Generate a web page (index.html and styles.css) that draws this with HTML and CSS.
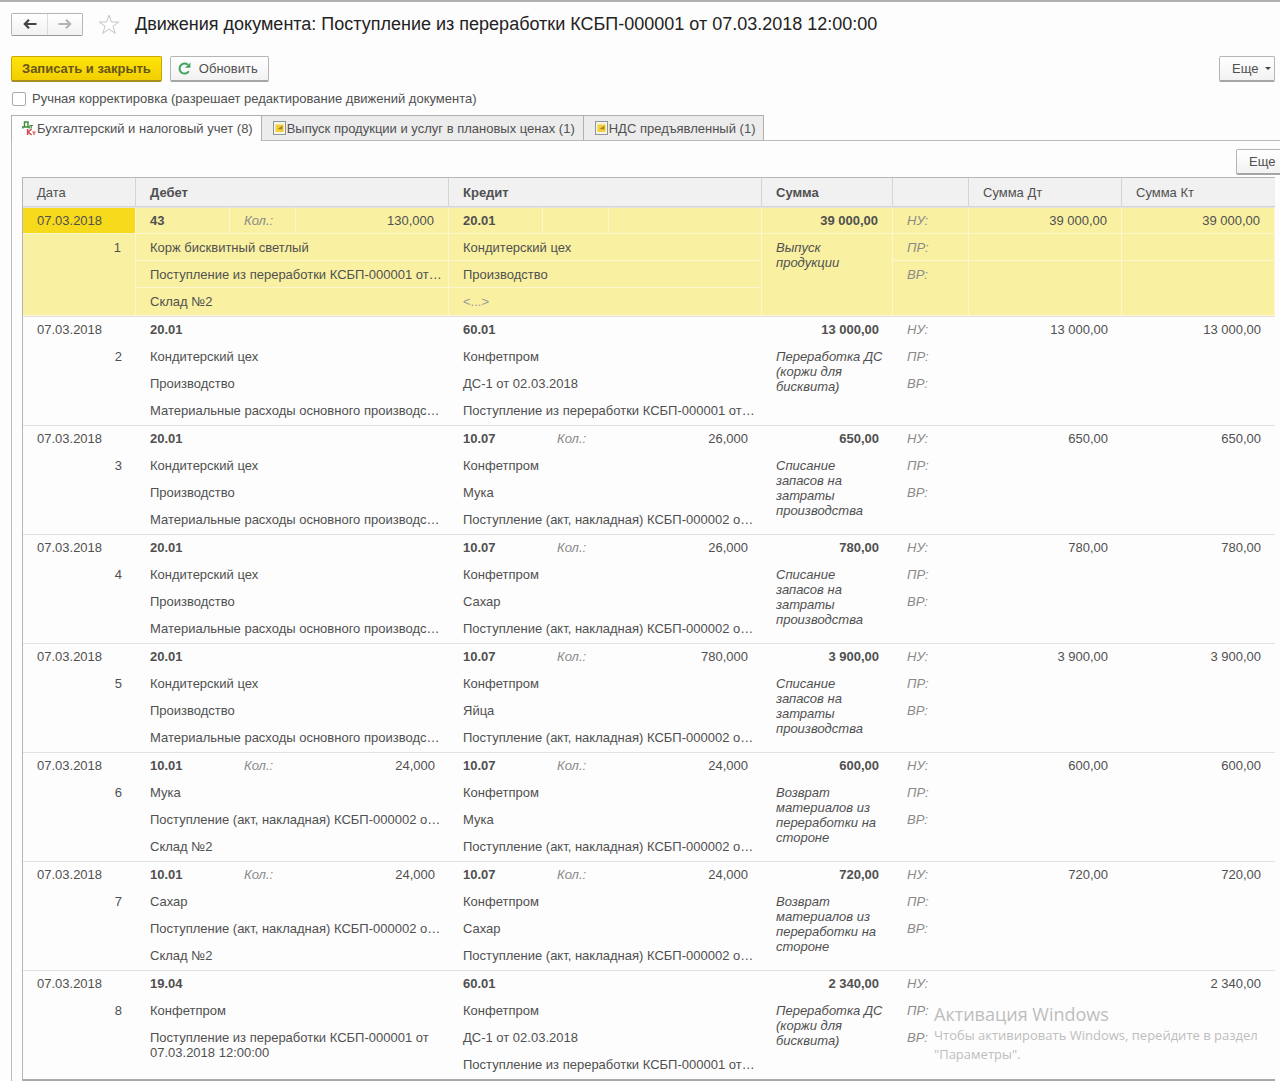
FILE: index.html
```html
<!DOCTYPE html>
<html lang="ru">
<head>
    <meta charset="UTF-8">
    <meta name="viewport" content="width=device-width, initial-scale=1.0">
    <title>Движения документа</title>
    <link rel="stylesheet" href="styles.css">
</head>
<body>
    <header class="title-bar">
        <div class="nav-buttons">
            <button type="button" aria-label="Назад">
                <svg width="14" height="12" viewBox="0 0 14 12"><path d="M13.5 6H2M6 1.8L1.8 6L6 10.2" fill="none" stroke="#444" stroke-width="2.2"/></svg>
            </button>
            <button type="button" aria-label="Вперед">
                <svg width="14" height="12" viewBox="0 0 14 12"><path d="M0.5 6H12M8 1.8L12.2 6L8 10.2" fill="none" stroke="#b4b4b4" stroke-width="2.2"/></svg>
            </button>
        </div>
        <svg class="star" width="22" height="21" viewBox="0 0 22 21"><path d="M11 1.2L13.4 8H20.8L14.9 12.2L17.2 19.4L11 15L4.8 19.4L7.1 12.2L1.2 8H8.6Z" fill="#fff" stroke="#c4c4c4"/></svg>
        <h1>Движения документа: Поступление из переработки КСБП-000001 от 07.03.2018 12:00:00</h1>
    </header>

    <div class="toolbar">
        <button type="button" class="btn btn-primary">Записать и закрыть</button>
        <button type="button" class="btn btn-refresh">
            <svg width="13" height="13" viewBox="0 0 13 13"><path d="M10.8 9.2A5 5 0 1 1 9.8 2.8" fill="none" stroke="#3fa45b" stroke-width="2"/><path d="M12.4 0.4V5.8H7Z" fill="#3fa45b"/></svg>
            Обновить
        </button>
        <button type="button" class="btn btn-more">Еще <span class="caret"></span></button>
    </div>

    <label class="manual"><input type="checkbox"> Ручная корректировка (разрешает редактирование движений документа)</label>

    <nav class="tabs">
        <button type="button" class="tab active">
            <svg width="14" height="15" viewBox="0 0 14 15" fill="none">
                <path d="M2.5 6V1H6V6M0.8 7.5V6H7.2V7.5" stroke="#3c8a3c" stroke-width="1.4"/>
                <path d="M7.5 4.5H11M9.2 4.5V7.5" stroke="#3c8a3c" stroke-width="1.2"/>
                <path d="M5.6 8V14M9.6 8L6.2 11L9.6 14" stroke="#cf4a50" stroke-width="1.5"/>
                <path d="M10.4 11H13.6M12 11V14" stroke="#cf4a50" stroke-width="1.2"/>
            </svg>Бухгалтерский и налоговый учет (8)
        </button>
        <button type="button" class="tab">
            <svg width="13" height="14" viewBox="0 0 13 14"><rect x="0.5" y="0.5" width="12" height="13" fill="#f7f4e4" stroke="#8d959c"/><path d="M2.5 3.5H10.5V11H2.5Z" fill="#f2cf3c"/><path d="M4.5 8L9.5 4.5V8.5Z" fill="#a98717"/></svg>Выпуск продукции и услуг в плановых ценах (1)
        </button>
        <button type="button" class="tab">
            <svg width="13" height="14" viewBox="0 0 13 14"><rect x="0.5" y="0.5" width="12" height="13" fill="#f7f4e4" stroke="#8d959c"/><path d="M2.5 3.5H10.5V11H2.5Z" fill="#f2cf3c"/><path d="M4.5 8L9.5 4.5V8.5Z" fill="#a98717"/></svg>НДС предъявленный (1)
        </button>
    </nav>

    <main class="panel">
        <div class="panel-toolbar">
            <button type="button" class="btn btn-more">Еще <span class="caret"></span></button>
        </div>

        <table class="entries">
            <colgroup>
                <col class="c-date">
                <col class="c-account"><col class="c-label"><col class="c-qty">
                <col class="c-account"><col class="c-label"><col class="c-qty">
                <col class="c-sum"><col class="c-kind"><col class="c-total"><col class="c-total">
            </colgroup>
            <thead>
                <tr>
                    <th class="light">Дата</th>
                    <th colspan="3">Дебет</th>
                    <th colspan="3">Кредит</th>
                    <th>Сумма</th>
                    <th></th>
                    <th class="light">Сумма Дт</th>
                    <th class="light">Сумма Кт</th>
                </tr>
            </thead>
            <tbody class="selected">
                <tr>
                    <td class="current">07.03.2018</td>
                    <td class="acc">43</td><td class="hint">Кол.:</td><td class="num">130,000</td>
                    <td class="acc">20.01</td><td></td><td></td>
                    <td class="num acc">39 000,00</td>
                    <td class="hint">НУ:</td><td class="num">39 000,00</td><td class="num">39 000,00</td>
                </tr>
                <tr>
                    <td class="num" rowspan="3">1</td>
                    <td colspan="3">Корж бисквитный светлый</td>
                    <td colspan="3">Кондитерский цех</td>
                    <td class="note" rowspan="3">Выпуск продукции</td>
                    <td class="hint">ПР:</td><td></td><td></td>
                </tr>
                <tr>
                    <td colspan="3">Поступление из переработки КСБП-000001 от…</td>
                    <td colspan="3">Производство</td>
                    <td class="hint" rowspan="2">ВР:</td><td rowspan="2"></td><td rowspan="2"></td>
                </tr>
                <tr>
                    <td colspan="3">Склад №2</td>
                    <td colspan="3" class="empty">&lt;...&gt;</td>
                </tr>
            </tbody>
            <tbody>
                <tr>
                    <td>07.03.2018</td>
                    <td class="acc">20.01</td><td></td><td></td>
                    <td class="acc">60.01</td><td></td><td></td>
                    <td class="num acc">13 000,00</td>
                    <td class="hint">НУ:</td><td class="num">13 000,00</td><td class="num">13 000,00</td>
                </tr>
                <tr>
                    <td class="num" rowspan="3">2</td>
                    <td colspan="3">Кондитерский цех</td>
                    <td colspan="3">Конфетпром</td>
                    <td class="note" rowspan="3">Переработка ДС (коржи для бисквита)</td>
                    <td class="hint">ПР:</td><td></td><td></td>
                </tr>
                <tr>
                    <td colspan="3">Производство</td>
                    <td colspan="3">ДС-1 от 02.03.2018</td>
                    <td class="hint" rowspan="2">ВР:</td><td rowspan="2"></td><td rowspan="2"></td>
                </tr>
                <tr>
                    <td colspan="3">Материальные расходы основного производс…</td>
                    <td colspan="3">Поступление из переработки КСБП-000001 от…</td>
                </tr>
            </tbody>
            <tbody>
                <tr>
                    <td>07.03.2018</td>
                    <td class="acc">20.01</td><td></td><td></td>
                    <td class="acc">10.07</td><td class="hint">Кол.:</td><td class="num">26,000</td>
                    <td class="num acc">650,00</td>
                    <td class="hint">НУ:</td><td class="num">650,00</td><td class="num">650,00</td>
                </tr>
                <tr>
                    <td class="num" rowspan="3">3</td>
                    <td colspan="3">Кондитерский цех</td>
                    <td colspan="3">Конфетпром</td>
                    <td class="note" rowspan="3">Списание запасов на затраты производства</td>
                    <td class="hint">ПР:</td><td></td><td></td>
                </tr>
                <tr>
                    <td colspan="3">Производство</td>
                    <td colspan="3">Мука</td>
                    <td class="hint" rowspan="2">ВР:</td><td rowspan="2"></td><td rowspan="2"></td>
                </tr>
                <tr>
                    <td colspan="3">Материальные расходы основного производс…</td>
                    <td colspan="3">Поступление (акт, накладная) КСБП-000002 о…</td>
                </tr>
            </tbody>
            <tbody>
                <tr>
                    <td>07.03.2018</td>
                    <td class="acc">20.01</td><td></td><td></td>
                    <td class="acc">10.07</td><td class="hint">Кол.:</td><td class="num">26,000</td>
                    <td class="num acc">780,00</td>
                    <td class="hint">НУ:</td><td class="num">780,00</td><td class="num">780,00</td>
                </tr>
                <tr>
                    <td class="num" rowspan="3">4</td>
                    <td colspan="3">Кондитерский цех</td>
                    <td colspan="3">Конфетпром</td>
                    <td class="note" rowspan="3">Списание запасов на затраты производства</td>
                    <td class="hint">ПР:</td><td></td><td></td>
                </tr>
                <tr>
                    <td colspan="3">Производство</td>
                    <td colspan="3">Сахар</td>
                    <td class="hint" rowspan="2">ВР:</td><td rowspan="2"></td><td rowspan="2"></td>
                </tr>
                <tr>
                    <td colspan="3">Материальные расходы основного производс…</td>
                    <td colspan="3">Поступление (акт, накладная) КСБП-000002 о…</td>
                </tr>
            </tbody>
            <tbody>
                <tr>
                    <td>07.03.2018</td>
                    <td class="acc">20.01</td><td></td><td></td>
                    <td class="acc">10.07</td><td class="hint">Кол.:</td><td class="num">780,000</td>
                    <td class="num acc">3 900,00</td>
                    <td class="hint">НУ:</td><td class="num">3 900,00</td><td class="num">3 900,00</td>
                </tr>
                <tr>
                    <td class="num" rowspan="3">5</td>
                    <td colspan="3">Кондитерский цех</td>
                    <td colspan="3">Конфетпром</td>
                    <td class="note" rowspan="3">Списание запасов на затраты производства</td>
                    <td class="hint">ПР:</td><td></td><td></td>
                </tr>
                <tr>
                    <td colspan="3">Производство</td>
                    <td colspan="3">Яйца</td>
                    <td class="hint" rowspan="2">ВР:</td><td rowspan="2"></td><td rowspan="2"></td>
                </tr>
                <tr>
                    <td colspan="3">Материальные расходы основного производс…</td>
                    <td colspan="3">Поступление (акт, накладная) КСБП-000002 о…</td>
                </tr>
            </tbody>
            <tbody>
                <tr>
                    <td>07.03.2018</td>
                    <td class="acc">10.01</td><td class="hint">Кол.:</td><td class="num">24,000</td>
                    <td class="acc">10.07</td><td class="hint">Кол.:</td><td class="num">24,000</td>
                    <td class="num acc">600,00</td>
                    <td class="hint">НУ:</td><td class="num">600,00</td><td class="num">600,00</td>
                </tr>
                <tr>
                    <td class="num" rowspan="3">6</td>
                    <td colspan="3">Мука</td>
                    <td colspan="3">Конфетпром</td>
                    <td class="note" rowspan="3">Возврат материалов из переработки на стороне</td>
                    <td class="hint">ПР:</td><td></td><td></td>
                </tr>
                <tr>
                    <td colspan="3">Поступление (акт, накладная) КСБП-000002 о…</td>
                    <td colspan="3">Мука</td>
                    <td class="hint" rowspan="2">ВР:</td><td rowspan="2"></td><td rowspan="2"></td>
                </tr>
                <tr>
                    <td colspan="3">Склад №2</td>
                    <td colspan="3">Поступление (акт, накладная) КСБП-000002 о…</td>
                </tr>
            </tbody>
            <tbody>
                <tr>
                    <td>07.03.2018</td>
                    <td class="acc">10.01</td><td class="hint">Кол.:</td><td class="num">24,000</td>
                    <td class="acc">10.07</td><td class="hint">Кол.:</td><td class="num">24,000</td>
                    <td class="num acc">720,00</td>
                    <td class="hint">НУ:</td><td class="num">720,00</td><td class="num">720,00</td>
                </tr>
                <tr>
                    <td class="num" rowspan="3">7</td>
                    <td colspan="3">Сахар</td>
                    <td colspan="3">Конфетпром</td>
                    <td class="note" rowspan="3">Возврат материалов из переработки на стороне</td>
                    <td class="hint">ПР:</td><td></td><td></td>
                </tr>
                <tr>
                    <td colspan="3">Поступление (акт, накладная) КСБП-000002 о…</td>
                    <td colspan="3">Сахар</td>
                    <td class="hint" rowspan="2">ВР:</td><td rowspan="2"></td><td rowspan="2"></td>
                </tr>
                <tr>
                    <td colspan="3">Склад №2</td>
                    <td colspan="3">Поступление (акт, накладная) КСБП-000002 о…</td>
                </tr>
            </tbody>
            <tbody>
                <tr>
                    <td>07.03.2018</td>
                    <td class="acc">19.04</td><td></td><td></td>
                    <td class="acc">60.01</td><td></td><td></td>
                    <td class="num acc">2 340,00</td>
                    <td class="hint">НУ:</td><td></td><td class="num">2 340,00</td>
                </tr>
                <tr>
                    <td class="num" rowspan="3">8</td>
                    <td colspan="3">Конфетпром</td>
                    <td colspan="3">Конфетпром</td>
                    <td class="note" rowspan="3">Переработка ДС (коржи для бисквита)</td>
                    <td class="hint">ПР:</td><td></td><td></td>
                </tr>
                <tr>
                    <td class="wrap" colspan="3" rowspan="2">Поступление из переработки КСБП-000001 от 07.03.2018 12:00:00</td>
                    <td colspan="3">ДС-1 от 02.03.2018</td>
                    <td class="hint" rowspan="2">ВР:</td><td rowspan="2"></td><td rowspan="2"></td>
                </tr>
                <tr>
                    <td colspan="3">Поступление из переработки КСБП-000001 от…</td>
                </tr>
            </tbody>
        </table>
    </main>

    <aside class="activation">
        <h2>Активация Windows</h2>
        <p>Чтобы активировать Windows, перейдите в раздел "Параметры".</p>
    </aside>
</body>
</html>
```
FILE: styles.css
```css
* {
    box-sizing: border-box;
}
body {
    position: relative;
    margin: 0;
    padding-left: 11px;
    border-top: 2px solid #b0b0b0;
    background-color: #fdfdfd;
    color: #505050;
    font-family: "Liberation Sans", Arial, sans-serif;
    font-size: 13px;
    line-height: 15px;
    overflow-x: hidden;
}
button {
    font: inherit;
    color: inherit;
    cursor: pointer;
}

/* Title */
.title-bar {
    display: flex;
    align-items: center;
    height: 44px;
}
.nav-buttons {
    display: flex;
    border: 1px solid #b5b5b5;
    border-bottom-color: #999;
    border-radius: 2px;
}
.nav-buttons button {
    display: flex;
    align-items: center;
    justify-content: center;
    width: 35px;
    height: 21px;
    padding: 0;
    border: none;
    background: linear-gradient(#fff, #f2f2f2);
}
.nav-buttons button + button {
    border-left: 1px solid #ddd;
}
.star {
    margin: 0 15px;
}
h1 {
    margin: 0;
    font-size: 18px;
    font-weight: normal;
    line-height: 22px;
    color: #222;
    white-space: nowrap;
}

/* Buttons */
.toolbar {
    display: flex;
    gap: 8px;
    padding: 10px 5px 0 0;
}
.btn {
    display: flex;
    align-items: center;
    height: 26px;
    padding: 0 10px;
    border: 1px solid #b5b5b5;
    border-bottom: 2px solid #a5a5a5;
    border-radius: 2px;
    background: linear-gradient(#fff, #f2f2f2);
    white-space: nowrap;
}
.btn-primary {
    border-color: #c8a800;
    border-bottom-color: #a48f20;
    background: linear-gradient(#ffe30a, #f2cf00);
    font-weight: bold;
    color: #66561a;
}
.btn-refresh {
    gap: 8px;
    padding-left: 7px;
}
.btn-more {
    gap: 7px;
    width: 56px;
    margin-left: auto;
    padding: 0 0 0 12px;
}
.caret {
    border: 3px solid transparent;
    border-top-color: #444;
    border-bottom: none;
}
.manual {
    display: flex;
    align-items: center;
    gap: 6px;
    height: 33px;
}
.manual input {
    appearance: none;
    width: 14px;
    height: 14px;
    margin: 0 0 0 1px;
    border: 1px solid #aaa;
    border-radius: 2px;
    background-color: #fff;
}

/* Tabs */
.tabs {
    display: flex;
    border-bottom: 1px solid #bbb;
}
.tab {
    display: flex;
    align-items: center;
    height: 25px;
    margin-left: -1px;
    padding: 0 8px 0 11px;
    border: 1px solid #b0b0b0;
    border-bottom: none;
    background-color: #ececec;
    white-space: nowrap;
}
.tab svg {
    margin-right: 1px;
}
.tab.active {
    height: 26px;
    margin: 0 0 -1px;
    padding-left: 10px;
    background-color: #fdfdfd;
}

/* Table */
.panel {
    padding: 8px 5px 0 10px;
    border-left: 1px solid #bbb;
}
.panel-toolbar {
    display: flex;
    margin: 0 -17px 2px 0;
}
.entries {
    width: 100%;
    table-layout: fixed;
    border-collapse: separate;
    border-spacing: 0;
    border: 1px solid #b5b5b5;
    border-right: none;
    border-bottom: 2px solid #aaa;
}
.c-date { width: 113px; }
.c-account { width: 94px; }
.c-label { width: 66px; }
.c-qty { width: 153px; }
.c-sum { width: 131px; }
.c-kind { width: 76px; }
.c-total { width: 153px; }
th {
    height: 29px;
    padding: 0 14px;
    border-right: 1px solid #d5d5d5;
    border-bottom: 1px solid #d5d5d5;
    background-color: #f1f1f1;
    text-align: left;
    white-space: nowrap;
}
th:last-child {
    border-right: none;
}
th.light {
    font-weight: normal;
}
td {
    height: 27px;
    padding: 6px 14px 0;
    vertical-align: top;
    white-space: nowrap;
}
tr:last-child td {
    height: 28px;
}
tbody tr:first-child td {
    border-top: 1px solid #e2e2e2;
    padding-top: 5px;
}
.num {
    text-align: right;
}
.acc {
    font-weight: bold;
}
.hint {
    font-style: italic;
    color: #8a8a8a;
}
.note {
    padding-right: 8px;
    font-style: italic;
    white-space: normal;
}
.wrap {
    white-space: normal;
}
.empty {
    color: #999;
}
.selected td {
    border-right: 1px solid #fdf7cf;
    border-bottom: 1px solid #fdf7cf;
    background-color: #f9f0a1;
}
.selected .current {
    background-color: #f8da1c;
}

/* Windows watermark */
.activation {
    position: absolute;
    right: 8px;
    bottom: 17px;
    width: 338px;
    font-family: "Open Sans", "Noto Sans", sans-serif;
    color: #bdbdbd;
    pointer-events: none;
}
.activation h2 {
    margin: 0;
    font-size: 18px;
    font-weight: normal;
    line-height: 24px;
}
.activation p {
    margin: 0;
    font-size: 13px;
    line-height: 19px;
}
```
